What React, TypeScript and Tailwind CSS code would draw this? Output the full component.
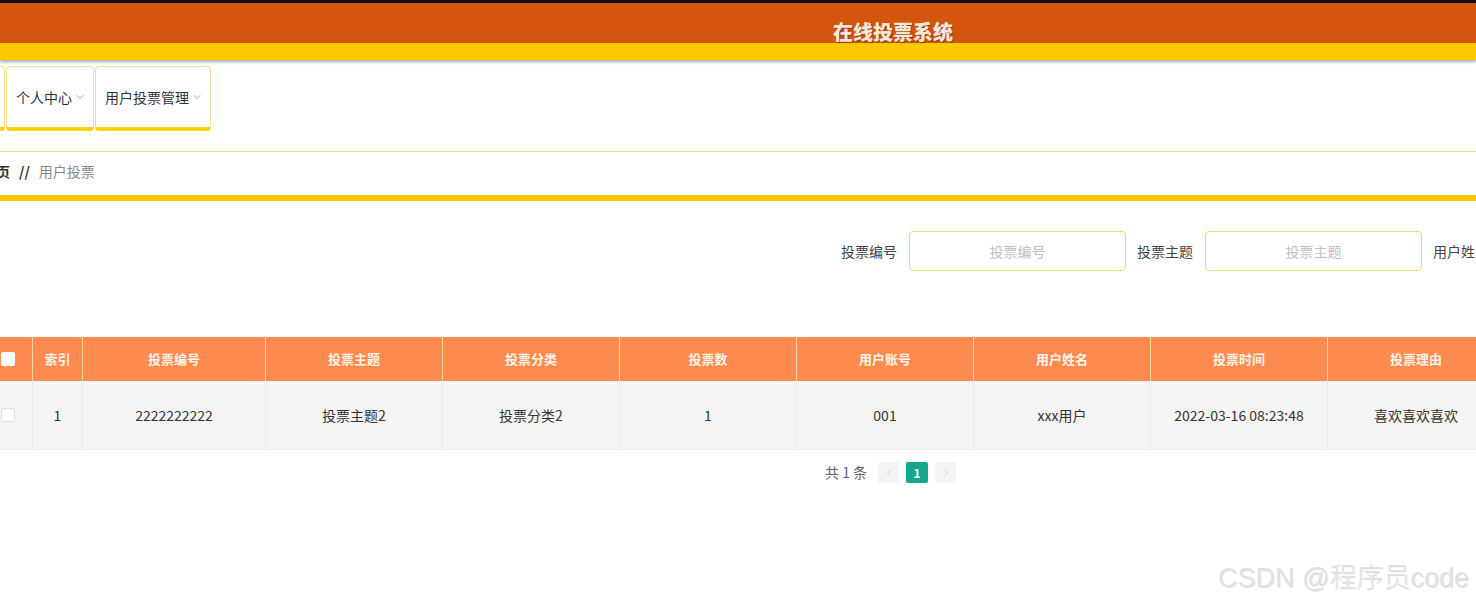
import { ChevronDown, ChevronLeft, ChevronRight } from 'lucide-react';

const columns = [
  { key: 'idx', title: '索引', w: 'w-[50px]' },
  { key: 'no', title: '投票编号', w: 'w-[183px]' },
  { key: 'topic', title: '投票主题', w: 'w-[177px]' },
  { key: 'cat', title: '投票分类', w: 'w-[177px]' },
  { key: 'count', title: '投票数', w: 'w-[177px]' },
  { key: 'account', title: '用户账号', w: 'w-[177px]' },
  { key: 'name', title: '用户姓名', w: 'w-[177px]' },
  { key: 'time', title: '投票时间', w: 'w-[177px]' },
  { key: 'reason', title: '投票理由', w: 'w-[177px]' },
];

const rows: Record<string, string>[] = [
  {
    idx: '1',
    no: '2222222222',
    topic: '投票主题2',
    cat: '投票分类2',
    count: '1',
    account: '001',
    name: 'xxx用户',
    time: '2022-03-16 08:23:48',
    reason: '喜欢喜欢喜欢',
  },
];

const navItems = ['首页', '个人中心', '用户投票管理'];

export default function App() {
  return (
    <div
      className="relative w-[1476px] h-[603px] overflow-hidden bg-white text-[#333]"
      style={{ fontFamily: '"Noto Sans CJK SC", "Noto Sans", sans-serif' }}
    >
      {/* Header */}
      <div className="h-[3px] bg-[#120c0c]" />
      <div className="h-[40px] bg-[#d4560e] flex items-end justify-center pl-[310px]">
        <h1 className="text-[20px] font-black leading-none text-[#f6e6d8] pb-[1px] [text-shadow:1px_1px_1px_rgba(80,20,0,0.5)]">
          在线投票系统
        </h1>
      </div>
      <div className="h-[17px] bg-[#fcc800] shadow-[0_2px_3px_rgba(0,0,0,0.35)]" />

      {/* Nav */}
      <div className="flex gap-px mt-[6px] ml-[-81px] h-[65px]">
        {navItems.map((item, i) => (
          <div
            key={item}
            className={`shrink-0 flex items-center gap-[2px] px-[7px] rounded-[4px] border border-[#f2de8a] border-b-[4px] border-b-[#fcd20f] text-[14px] text-[#333] ${
              i === 0 ? 'w-[86px]' : ''
            }`}
          >
            <span className="ml-[2px]">{item}</span>
            <ChevronDown size={12} strokeWidth={1.5} className="text-[#888]" />
          </div>
        ))}
      </div>

      {/* Breadcrumb */}
      <div className="mt-[20px] border-t border-[#f2dc6a] border-b-[6px] border-b-[#fcc800] h-[50px] flex items-center ml-[-18px] pb-[4px] text-[14px]">
        <span className="font-bold text-[#333]">首页</span>
        <span className="font-bold text-[#333] mx-[9px]">//</span>
        <span className="text-[#888]">用户投票</span>
      </div>

      {/* Search */}
      <div className="flex items-center mt-[30px] ml-[841px] text-[14px] whitespace-nowrap">
        <span className="shrink-0 text-[#444]">投票编号</span>
        <div className="shrink-0 ml-[12px] w-[217px] h-[40px] rounded-[4px] border border-[#f0dc6a] flex items-center justify-center text-[#c0c0c0]">
          投票编号
        </div>
        <span className="shrink-0 ml-[11px] text-[#444]">投票主题</span>
        <div className="shrink-0 ml-[12px] w-[217px] h-[40px] rounded-[4px] border border-[#f0dc6a] flex items-center justify-center text-[#c0c0c0]">
          投票主题
        </div>
        <span className="shrink-0 ml-[11px] text-[#444]">用户姓名</span>
      </div>

      {/* Table */}
      <div className="mt-[66px] ml-[-17px] w-max">
        <div className="flex h-[44px] bg-[#fd8a4e] text-white text-[13px] font-bold">
          <div className="w-[50px] flex items-center justify-center border-r border-[#f6d7a4]">
            <span className="w-[14px] h-[14px] bg-white rounded-[2px]" />
          </div>
          {columns.map((c) => (
            <div
              key={c.key}
              className={`${c.w} flex items-center justify-center border-r border-[#f6d7a4] text-[#fff3ea]`}
            >
              {c.title}
            </div>
          ))}
        </div>
        {rows.map((r, i) => (
          <div key={i} className="flex h-[69px] bg-[#f5f5f5] border-b border-[#ebebeb] text-[14px] text-[#333]">
            <div className="w-[50px] flex items-center justify-center border-r border-[#ebebeb]">
              <span className="w-[14px] h-[14px] bg-white border border-[#dcdfe6] rounded-[2px]" />
            </div>
            {columns.map((c) => (
              <div key={c.key} className={`${c.w} flex items-center justify-center border-r border-[#ebebeb]`}>
                {r[c.key]}
              </div>
            ))}
          </div>
        ))}
      </div>

      {/* Pagination */}
      <div className="flex items-center mt-[12px] ml-[825px] text-[14px] text-[#606266]">
        <span>共 1 条</span>
        <div className="ml-[11px] w-[21px] h-[21px] bg-[#f4f4f5] rounded-[2px] flex items-center justify-center text-[#c0c4cc]">
          <ChevronLeft size={12} strokeWidth={1.5} />
        </div>
        <div className="ml-[7px] w-[22px] h-[21px] bg-[#16a78c] rounded-[2px] flex items-center justify-center text-white text-[12px] font-bold">
          1
        </div>
        <div className="ml-[7px] w-[21px] h-[21px] bg-[#f4f4f5] rounded-[2px] flex items-center justify-center text-[#c0c4cc]">
          <ChevronRight size={12} strokeWidth={1.5} />
        </div>
      </div>

      {/* Watermark */}
      <div
        className="absolute left-[1218px] top-[558px] text-[27px] font-light text-[#e2e2e2] whitespace-nowrap [text-shadow:1px_1px_0_rgba(0,0,0,0.12)]"
        style={{ fontFamily: '"Liberation Sans", "Noto Sans CJK SC", sans-serif' }}
      >
        CSDN @程序员code
      </div>
    </div>
  );
}
